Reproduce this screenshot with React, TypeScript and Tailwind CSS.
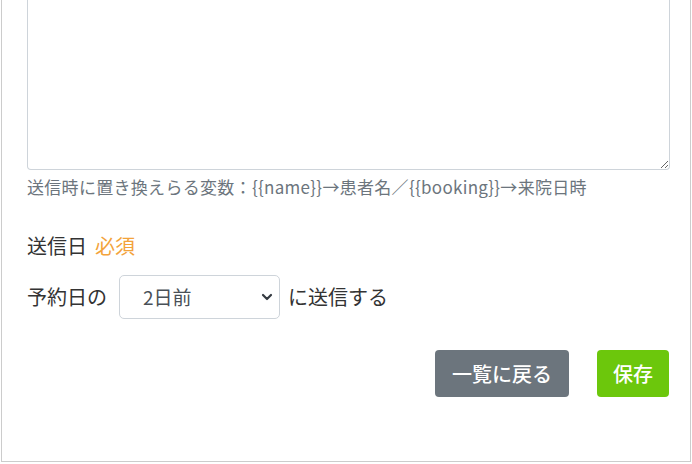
export default function App() {
  return (
    <div
      className="w-[692px] h-[464px] bg-white"
      style={{ fontFamily: '"Noto Sans CJK JP", "Liberation Sans", sans-serif' }}
    >
      <div className="ml-[1px] w-[690px] h-[462px] border-x border-b border-[#cccccc] pl-[25px] pr-[20px]">
        <textarea
          className="block w-full h-[170px] border border-t-0 border-[#ced4da] rounded-b-[4px] resize-y outline-none"
          defaultValue=""
        />
        <p className="mt-[6px] text-[17px] leading-[22px] tracking-[0.3px] text-[#6c757d]">
          送信時に置き換えらる変数：{"{{name}}"}→患者名／{"{{booking}}"}→来院日時
        </p>

        <div className="mt-[34px] flex items-center gap-[8px] text-[20px] leading-[28px] text-[#333333]">
          <span>送信日</span>
          <span className="text-[#f3a33a]">必須</span>
        </div>

        <div className="mt-[15px] flex items-center text-[20px] text-[#333333]">
          <span>予約日の</span>
          <div className="relative ml-[12px] mr-[8px]">
            <select
              className="appearance-none w-[161px] h-[44px] border border-[#ced4da] rounded-[5px] bg-white pl-[23px] text-[19px] text-[#495057] outline-none"
              defaultValue="2"
            >
              <option value="1">1日前</option>
              <option value="2">2日前</option>
              <option value="3">3日前</option>
            </select>
            <svg
              className="pointer-events-none absolute right-[7px] top-[17px]"
              width="12"
              height="10"
              viewBox="0 0 12 10"
            >
              <path d="M2 3l4 4 4-4" fill="none" stroke="#343a40" strokeWidth="2.2" strokeLinecap="round" strokeLinejoin="round" />
            </svg>
          </div>
          <span>に送信する</span>
        </div>

        <div className="mt-[31px] flex justify-end gap-[28px] pr-[1px]">
          <button className="h-[47px] w-[134px] rounded-[4px] bg-[#6c757d] text-[20px] font-medium text-white">
            一覧に戻る
          </button>
          <button className="h-[47px] w-[72px] rounded-[4px] bg-[#6cc70c] text-[20px] font-medium text-white">
            保存
          </button>
        </div>
      </div>
    </div>
  );
}
